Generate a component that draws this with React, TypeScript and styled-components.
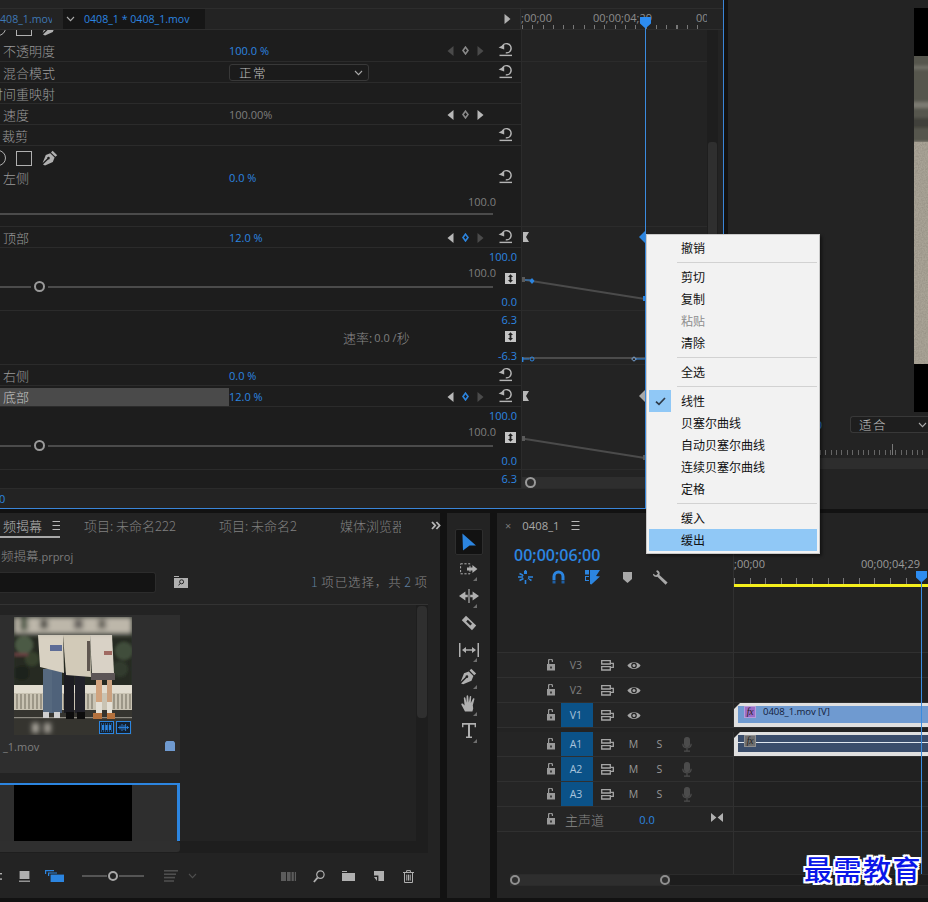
import * as React from 'react'
import styled, { createGlobalStyle } from 'styled-components'

const CJK = `"Noto Sans CJK SC", "Noto Sans", sans-serif`
const LATIN = `"Open Sans", "Noto Sans CJK SC", sans-serif`
const BLUE = '#2c85e0'
const GREY = '#8f8f8f'

const GlobalStyle = createGlobalStyle`
  html, body {
    margin: 0;
    padding: 0;
    background: #121212;
  }
  * {
    box-sizing: border-box;
  }
`

// icons
const Svg = styled.svg`
  display: block;
  flex: none;
`

const ResetIcon = () => (
  <Svg width="15" height="15" viewBox="0 0 15 15" fill="none" stroke="#b4b4b4">
    <path d="M4 5.2 A4.6 4.6 0 1 1 7.8 10.8" strokeWidth="1.5" />
    <path d="M0.6 5.6 L6.2 2.6 L6.2 7.6 Z" fill="#b4b4b4" stroke="none" />
    <path d="M1.5 13.4 H14" strokeWidth="1.4" />
  </Svg>
)

const Arrow = ({ dir, color }: { dir: 'l' | 'r'; color: string }) => (
  <Svg width="7" height="10" viewBox="0 0 7 10" fill={color}>
    <path d={dir === 'l' ? 'M6.5 0 V10 L0.5 5 Z' : 'M0.5 0 V10 L6.5 5 Z'} />
  </Svg>
)

const Diamond = ({ color }: { color: string }) => (
  <Svg width="7" height="9" viewBox="0 0 7 9" fill="none" stroke={color} strokeWidth="1.6">
    <path d="M3.5 1.1 L6 4.5 L3.5 7.9 L1 4.5 Z" />
  </Svg>
)

const StepperIcon = () => (
  <Svg width="11" height="11" viewBox="0 0 11 11">
    <rect width="11" height="11" fill="#c4c4c4" />
    <path d="M5.5 1.2 L8 4 H6.4 V7 H8 L5.5 9.8 L3 7 H4.6 V4 H3 Z" fill="#1d1d1d" />
  </Svg>
)

const PenIcon = ({ size = 16 }: { size?: number }) => (
  <Svg width={size} height={size} viewBox="0 0 16 16" fill="#b0b0b0">
    <path d="M10.6 0.8 L15.2 5.2 L13.4 6.8 L9 2.4 Z" />
    <path d="M8.2 3.2 L12.6 7.6 L10.8 12 L3 15.4 L1 14.6 L6.2 9.4 A1.3 1.3 0 1 0 5.2 8.4 L0.6 13 L3.8 5 Z" />
  </Svg>
)

const Chevron = ({ color = '#aaa' }: { color?: string }) => (
  <Svg width="9" height="6" viewBox="0 0 9 6" fill="none" stroke={color} strokeWidth="1.1">
    <path d="M1 1 L4.5 4.6 L8 1" />
  </Svg>
)

const MenuLines = () => (
  <Svg width="9" height="9" viewBox="0 0 9 9" stroke="#b8b8b8" strokeWidth="1">
    <path d="M0.5 0.5 H8.5 M0.5 4.5 H8.5 M0.5 8.5 H8.5" />
  </Svg>
)

const LockIcon = () => (
  <Svg width="10" height="12" viewBox="0 0 10 12" fill="#9a9a9a">
    <path d="M2 1 A2.6 2.6 0 0 1 7 1.6 V3 H5.8 V2 A1.3 1.3 0 0 0 3.2 2 V5 H9 V11.5 H1 V5 H2 Z M4.2 7.4 V9.6 H5.8 V7.4 Z" fillRule="evenodd" />
  </Svg>
)

const SyncIcon = () => (
  <Svg width="13" height="11" viewBox="0 0 13 11" fill="none" stroke="#a6a6a6" strokeWidth="1.3">
    <path d="M0.7 0.7 H9.3 V4 H0.7 Z M0.7 6.6 H9.3 V10 H0.7 Z" />
    <path d="M9.3 3.4 H12.3 V7.4 H9.3" />
  </Svg>
)

const EyeIcon = () => (
  <Svg width="14" height="9" viewBox="0 0 14 9">
    <path d="M0.4 4.5 C3 0 11 0 13.6 4.5 C11 9 3 9 0.4 4.5 Z" fill="#a6a6a6" />
    <circle cx="7" cy="4.5" r="2.8" fill="#232323" />
    <circle cx="7" cy="4.5" r="1.5" fill="#a6a6a6" />
  </Svg>
)

const MicIcon = () => (
  <Svg width="10" height="15" viewBox="0 0 10 15" fill="none" stroke="#4c4c4c" strokeWidth="1.2">
    <rect x="2.6" y="0.6" width="4.8" height="9" rx="2.4" fill="#4c4c4c" />
    <path d="M0.8 6.8 C0.8 12.2 9.2 12.2 9.2 6.8 M5 11 V14 M2 14.2 H8" />
  </Svg>
)

const Corner = styled.span`
  position: absolute;
  right: 6px;
  bottom: 1px;
  width: 0;
  height: 0;
  border-left: 4px solid transparent;
  border-bottom: 4px solid #6e6e6e;
`

const SelectTool = () => (
  <Svg width="16" height="18" viewBox="0 0 16 18" fill={BLUE}>
    <path d="M1.4 0.4 L15 12.6 L8.6 12.6 L2 17.6 Z" />
  </Svg>
)

const TrackSelectTool = () => (
  <Svg width="18" height="12" viewBox="0 0 18 12" fill="none" stroke="#b0b0b0">
    <rect x="0.6" y="0.8" width="9.4" height="10" strokeWidth="1" strokeDasharray="2.2 1.6" />
    <path d="M7 4.6 H12.4 V2 L17.4 6 L12.4 10 V7.4 H7 Z" fill="#b0b0b0" stroke="none" />
  </Svg>
)

const RippleTool = () => (
  <Svg width="20" height="14" viewBox="0 0 20 14" fill="#b0b0b0">
    <path d="M0 7 L6.4 2.6 V5.8 H8.8 V8.2 H6.4 V11.4 Z M20 7 L13.6 2.6 V5.8 H11.2 V8.2 H13.6 V11.4 Z" />
    <rect x="9.4" y="0" width="1.2" height="14" />
  </Svg>
)

const RazorTool = () => (
  <Svg width="16" height="16" viewBox="0 0 16 16">
    <path d="M5 0.8 L15.2 10.4 L11 15.2 L0.8 5.2 Z" fill="#b0b0b0" />
    <path d="M6 5.6 L10.2 9.6" stroke="#232323" strokeWidth="2.4" />
  </Svg>
)

const SlipTool = () => (
  <Svg width="20" height="14" viewBox="0 0 20 14" fill="#b0b0b0">
    <rect x="0" y="0" width="1.5" height="14" />
    <rect x="18.5" y="0" width="1.5" height="14" />
    <path d="M3 7 L7 4 V6.2 H13 V4 L17 7 L13 10 V7.8 H7 V10 Z" />
  </Svg>
)

const HandTool = () => (
  <Svg width="16" height="17" viewBox="0 0 16 17" fill="#b0b0b0">
    <path d="M4 16.5 L0.4 9.8 C0 8.6 1.4 8 2.2 9 L3.6 10.6 L2.8 3 C2.8 2 4.2 2 4.4 3 L5.4 7.8 L5.6 1 C5.8 0 7.2 0 7.2 1 L7.8 7.6 L8.8 1.6 C9 0.6 10.4 0.8 10.2 1.8 L9.8 8 L12 3.6 C12.6 2.8 13.6 3.2 13.4 4.2 L11.8 10.2 L12.2 13.4 L11.4 16.5 Z" />
  </Svg>
)

const TypeTool = () => (
  <Svg width="14" height="15" viewBox="0 0 14 15" fill="#b0b0b0">
    <path d="M0 0 H14 V4.2 H12.6 V1.8 H8 V13.4 H10 V15 H4 V13.4 H6 V1.8 H1.4 V4.2 H0 Z" />
  </Svg>
)

const MagnetIcon = () => (
  <Svg width="13" height="14" viewBox="0 0 13 14" fill="none">
    <path d="M2 10 V6.4 A4.5 4.5 0 0 1 11 6.4 V10" stroke={BLUE} strokeWidth="3" />
    <path d="M0.5 10.4 H3.5 V13.6 H0.5 Z M9.5 10.4 H12.5 V13.6 H9.5 Z" fill="#1f5fa3" />
  </Svg>
)

const NestIcon = () => (
  <Svg width="15" height="15" viewBox="0 0 15 15" fill={BLUE}>
    <path d="M0 0 H4 V4.4 H0 Z M0 6 H4 V7 H1 V10 H4 V11 H0 Z" />
    <path d="M5 0 H15 L11 6 L15 6.4 L6.4 14.4 L5 14 Z" />
  </Svg>
)

const LinkedIcon = () => (
  <Svg width="15" height="14" viewBox="0 0 15 14" stroke={BLUE} strokeWidth="1.6" fill={BLUE}>
    <path d="M7.5 0 V4 M7.5 10 V14 M0 7 H5 M10 7 H15 M1.5 3.5 L5.5 5.5 M13.5 10.5 L9.5 8.5 M1.5 10.5 L5.5 8.5" />
    <path d="M3 1.5 L13 12.5" stroke="#232323" strokeWidth="1" />
    <rect x="6" y="1" width="3" height="3" stroke="none" />
  </Svg>
)

const MarkerIcon = () => (
  <Svg width="9" height="11" viewBox="0 0 9 11" fill="#a8a8a8">
    <path d="M0 0 H9 V7 L4.5 11 L0 7 Z" />
  </Svg>
)

const WrenchIcon = () => (
  <Svg width="15" height="15" viewBox="0 0 15 15" fill="#a8a8a8">
    <path d="M4.6 0.2 A4 4 0 0 1 6.4 5 L14.6 12.4 L12.6 14.8 L4.4 6.8 A4 4 0 0 1 0 5 L0.2 3.8 L3 5.6 L5 3.6 L3 1 Z" />
  </Svg>
)

const MergeIcon = () => (
  <Svg width="12" height="9" viewBox="0 0 12 9" fill="#b0b0b0">
    <path d="M0 0 L5.4 4.5 L0 9 Z M12 0 L6.6 4.5 L12 9 Z" />
  </Svg>
)

const SearchBinIcon = () => (
  <Svg width="14" height="12" viewBox="0 0 14 12">
    <path d="M0 0 H5 V1 H0 Z M0 2 H14 V12 H0 Z" fill="#b0b0b0" />
    <circle cx="7.6" cy="5.8" r="2" fill="none" stroke="#232323" />
    <path d="M6.2 7.4 L4.6 9.4" stroke="#232323" />
  </Svg>
)

const SlimDoubleArrow = () => (
  <Svg width="10" height="9" viewBox="0 0 10 9" fill="none" stroke="#b8b8b8" strokeWidth="1.8">
    <path d="M1 1 L4.2 4.5 L1 8 M5.4 1 L8.6 4.5 L5.4 8" />
  </Svg>
)

const ListViewStub = () => (
  <Svg width="2" height="9" viewBox="0 0 2 9" fill="#b0b0b0">
    <rect y="1" width="2" height="1.4" />
    <rect y="6.4" width="2" height="1.4" />
  </Svg>
)

const ThumbViewIcon = () => (
  <Svg width="11" height="11" viewBox="0 0 11 11" fill="#b0b0b0">
    <rect x="0.6" y="0" width="9.8" height="8" />
    <rect x="0" y="9.6" width="11" height="1.2" />
  </Svg>
)

const StackedIcon = () => (
  <Svg width="19" height="12" viewBox="0 0 19 12" fill={BLUE}>
    <path d="M0 0 H9 V1.2 H1.2 V4 H0 Z M3 2.4 H12 V3.6 H4.2 V6 H3 Z" />
    <rect x="5.6" y="4.6" width="13.4" height="7.4" />
  </Svg>
)

const SortIcon = () => (
  <Svg width="14" height="12" viewBox="0 0 14 12" fill="#4f4f4f">
    <rect width="14" height="1.6" />
    <rect y="3.4" width="12" height="1.6" />
    <rect y="6.8" width="11" height="1.6" />
    <rect y="10.2" width="10" height="1.6" />
  </Svg>
)

const BarsIcon = () => (
  <Svg width="15" height="9" viewBox="0 0 15 9" fill="#5c5c5c">
    <rect width="5" height="9" />
    <rect x="6" width="3.6" height="9" />
    <rect x="10.6" width="2.2" height="9" />
    <rect x="13.8" width="1.2" height="9" />
  </Svg>
)

const SearchIcon = () => (
  <Svg width="12" height="13" viewBox="0 0 12 13" fill="none" stroke="#b0b0b0">
    <circle cx="7.4" cy="4.6" r="3.7" strokeWidth="1.2" />
    <path d="M4.6 7.6 L0.9 12" strokeWidth="1.8" />
  </Svg>
)

const FolderIcon = () => (
  <Svg width="13" height="10" viewBox="0 0 13 10" fill="#b0b0b0">
    <path d="M0 0 H5 V1 H0 Z M0 2 H13 V10 H0 Z" />
  </Svg>
)

const NewItemIcon = () => (
  <Svg width="10" height="10" viewBox="0 0 10 10" fill="#b0b0b0">
    <path d="M0 0 H10 V10 H4.4 V4.6 H0 Z M0 6 H3 V10 Z" />
  </Svg>
)

const TrashIcon = () => (
  <Svg width="11" height="13" viewBox="0 0 11 13" fill="none" stroke="#b0b0b0">
    <path d="M0 2.5 H11 M3.6 2.5 V0.6 H7.4 V2.5 M1.5 2.5 V12.5 H9.5 V2.5 M3.8 4.6 V10.6 M5.5 4.6 V10.6 M7.2 4.6 V10.6" />
  </Svg>
)

const TagIcon = () => (
  <Svg width="10" height="10" viewBox="0 0 10 10" fill="#6f9ad0">
    <path d="M1.5 0 H8.5 L10 1.5 V10 H0 V1.5 Z" />
  </Svg>
)

const CheckIcon = () => (
  <Svg width="11" height="9" viewBox="0 0 11 9" fill="none" stroke="#2e3b49" strokeWidth="1.7">
    <path d="M1 4.6 L4 7.4 L10 1" />
  </Svg>
)

const FilmBadge = () => (
  <Svg width="15" height="13" viewBox="0 0 15 13">
    <rect x="0.5" y="0.5" width="14" height="12" fill="#14202e" stroke={BLUE} />
    <path d="M2 3 H13 M2 10 H13" stroke={BLUE} strokeDasharray="1 1" />
    <path d="M2.6 4 H5.2 V9 H2.6 Z M6.2 4 H8.8 V9 H6.2 Z M9.8 4 H12.4 V9 H9.8 Z" fill={BLUE} />
  </Svg>
)

const WaveBadge = () => (
  <Svg width="15" height="13" viewBox="0 0 15 13">
    <rect x="0.5" y="0.5" width="14" height="12" fill="#14202e" stroke={BLUE} />
    <path d="M2 6.5 H13 M4 4.5 V8.5 M6 3 V10 M8 4 V9 M9.6 3 V10 M11.4 5 V8" stroke={BLUE} strokeWidth="0.9" />
  </Svg>
)

// shell
const Frame = styled.div`
  position: relative;
  width: 928px;
  height: 902px;
  overflow: hidden;
  background: #121212;
  font-family: ${CJK};
  color: ${GREY};
  display: flex;
  flex-direction: column;
`

const TopArea = styled.div`
  height: 513px;
  display: flex;
`

const BottomArea = styled.div`
  height: 385px;
  display: flex;
`

const EffectPanel = styled.section`
  position: relative;
  width: 724px;
  height: 509px;
  background: #232323;
  border-right: 1px solid #3a85d8;
  border-bottom: 1px solid #3a85d8;
  display: flex;
  flex-direction: column;
`

const PanelTop = styled.div`
  height: 9px;
  border-bottom: 1px solid #2d2d2d;
`

const EffectHead = styled.div`
  height: 21px;
  display: grid;
  grid-template-columns: 521px 186px;
  border-bottom: 1px solid #2d2d2d;
`

const TabStrip = styled.div`
  display: flex;
  align-items: stretch;
  border-right: 1px solid #2d2d2d;
  padding-right: 9px;
`

const EffectTab = styled.div<{ $active?: boolean; $width: number }>`
  width: ${(p) => p.$width}px;
  display: flex;
  align-items: center;
  gap: 9px;
  overflow: hidden;
  padding-left: ${(p) => (p.$active ? 3 : 0)}px;
  background: ${(p) => (p.$active ? '#161616' : 'transparent')};
  color: ${(p) => (p.$active ? BLUE : '#3f78b4')};
  font: 10.6px ${LATIN};
  white-space: nowrap;
  margin-right: ${(p) => (p.$active ? 'auto' : '11px')};
`

const ClippedName = styled.span`
  margin-left: -6px;
`

const TabEnd = styled.span`
  align-self: center;
`

const LaneRuler = styled.div`
  position: relative;
  display: flex;
  overflow: hidden;
  padding-top: 1px;
  font: 11px ${LATIN};
  color: #8c8c8c;
  white-space: nowrap;
  &::after {
    content: '';
    position: absolute;
    left: 1px;
    right: 0;
    bottom: 0;
    height: 4px;
    background: repeating-linear-gradient(90deg, #777 0 1px, transparent 1px 10.3px);
  }
`

const RulerLabel = styled.span<{ $width: number }>`
  flex: none;
  width: ${(p) => p.$width}px;
`

const EffectBody = styled.div`
  display: flex;
  flex: 1;
  min-height: 0;
`

const RowList = styled.div`
  width: 707px;
  display: flex;
  flex-direction: column;
`

const VScroll = styled.div`
  width: 11px;
  background: #1e1e1e;
  padding-top: 112px;
`

const VThumb = styled.div`
  width: 9px;
  height: 160px;
  margin-left: 1px;
  border-radius: 3px 3px 0 0;
  background: #2f2f2f;
`

const Row = styled.div<{ $h: number; $bg?: string }>`
  height: ${(p) => p.$h}px;
  display: grid;
  grid-template-columns: 521px 186px;
  border-bottom: 1px solid #2b2b2b;
  background: ${(p) => p.$bg || '#1d1d1d'};
`

const Lane = styled.div<{ $bare?: boolean }>`
  position: relative;
  overflow: hidden;
  background: ${(p) => (p.$bare ? 'transparent' : '#232323')};
  border-left: 1px solid #2b2b2b;
`

const Prop = styled.div`
  display: grid;
  grid-template-columns: 229px 214px 46px 32px;
  align-items: center;
  align-self: end;
  height: 21px;
`

const Label = styled.span<{ $offset?: number; $hilite?: boolean }>`
  display: flex;
  align-items: center;
  height: 18px;
  padding-left: ${(p) => p.$offset ?? 3}px;
  font-size: 13px;
  font-weight: 300;
  color: ${(p) => (p.$hilite ? '#c4c4c4' : '#9a9a9a')};
  background: ${(p) => (p.$hilite ? '#4a4a4a' : 'transparent')};
  white-space: nowrap;
  overflow: hidden;
`

const ClipText = styled.span<{ $shift: number }>`
  margin-left: ${(p) => p.$shift}px;
`

const Value = styled.span<{ $grey?: boolean }>`
  font: 11px ${LATIN};
  color: ${(p) => (p.$grey ? '#7d7d7d' : BLUE)};
  white-space: pre;
`

const Keys = styled.div`
  display: flex;
  align-items: center;
  justify-content: space-between;
  padding: 0 5px 0 4px;
`

const ResetCell = styled.div`
  display: flex;
  justify-content: center;
  margin-top: -2px;
`

const BlendSelect = styled.div`
  width: 140px;
  height: 17px;
  display: flex;
  align-items: center;
  justify-content: space-between;
  padding: 0 5px 0 9px;
  border: 1px solid #383838;
  border-radius: 3px;
  background: #1b1b1b;
  font-size: 12.5px;
  font-weight: 300;
  letter-spacing: 1.6px;
  color: #c0c0c0;
`

const MaskShapes = styled.div<{ $clip?: boolean }>`
  display: flex;
  align-items: center;
  gap: 10px;
  height: 18px;
  margin-left: -10px;
  margin-top: ${(p) => (p.$clip ? -11 : 0)}px;
`

const MaskEllipse = styled.span`
  width: 16px;
  height: 16px;
  border-radius: 50%;
  border: 1px solid #b0b0b0;
`

const MaskRect = styled.span`
  width: 16px;
  height: 15px;
  border: 1px solid #b0b0b0;
`

const LeftStack = styled.div`
  display: flex;
  flex-direction: column;
  overflow: hidden;
`

const Spacer = styled.div<{ $h: number }>`
  height: ${(p) => p.$h}px;
  flex: none;
`

const SliderBlock = styled.div`
  display: grid;
  grid-template-columns: 493px 28px;
`

const SliderSide = styled.div<{ $top: number }>`
  display: flex;
  flex-direction: column;
  align-items: flex-end;
  width: 493px;
  padding-top: ${(p) => p.$top}px;
`

const SliderMax = styled.span`
  font: 11px/14px ${LATIN};
  color: #7d7d7d;
  margin-right: -3px;
`

const SliderLine = styled.div`
  width: 100%;
  height: 11px;
  display: flex;
  align-items: center;
  margin-top: 1px;
`

const SliderRail = styled.span<{ $width?: number }>`
  flex: none;
  height: 2px;
  background: #4b4b4b;
  ${(p) => (p.$width ? `width: ${p.$width}px;` : 'flex: 1;')}
`

const SliderKnob = styled.span`
  flex: none;
  width: 11px;
  height: 11px;
  margin: 0 3px 0 3px;
  border-radius: 50%;
  border: 2px solid #9a9a9a;
`

const RangeColumn = styled.div`
  display: flex;
  flex-direction: column;
  align-items: flex-end;
  justify-content: space-between;
  padding: 2px 4px 1px 0;
  font: 11px/14px ${LATIN};
  color: ${BLUE};
  white-space: nowrap;
`

const StepperWrap = styled.span`
  margin: -3px 1px 0 0;
`

const RateBlock = styled.div`
  display: flex;
  align-items: center;
  padding-left: 343px;
  font-size: 13px;
  font-weight: 300;
  color: #8a8a8a;
`

const RateValue = styled.span`
  font: 11px ${LATIN};
  color: #7d7d7d;
  margin: 0 0 0 2px;
`

const ScrubRow = styled.div`
  display: flex;
  align-items: center;
  height: 19px;
  font: 11px ${LATIN};
  color: ${BLUE};
`

const BlueTail = styled.span`
  margin-left: -1px;
`

const LaneBar = styled.div`
  position: absolute;
  left: 0;
  right: 0;
  bottom: 0;
  height: 11px;
  padding-left: 3px;
  display: flex;
  align-items: center;
  background: #2e2e2e;
`

const LaneKnob = styled.span`
  width: 11px;
  height: 11px;
  border-radius: 50%;
  border: 2px solid #9a9a9a;
`

const Playhead = styled.div<{ $left: number; $top: number; $h: number }>`
  position: absolute;
  left: ${(p) => p.$left}px;
  top: ${(p) => p.$top}px;
  width: 1px;
  height: ${(p) => p.$h}px;
  background: #3a8be0;
  &::before {
    content: '';
    position: absolute;
    left: -5px;
    top: -1px;
    width: 11px;
    height: 11px;
    background: #2d8cf0;
    clip-path: polygon(0 0, 100% 0, 100% 60%, 55% 100%, 45% 100%, 0 60%);
  }
`

// monitor
const Gutter = styled.div<{ $w: number }>`
  width: ${(p) => p.$w}px;
  flex: none;
`

const MonitorPanel = styled.section`
  flex: 1;
  height: 509px;
  background: #232323;
  display: flex;
  flex-direction: column;
  padding-top: 8px;
`

const VideoWrap = styled.div`
  height: 404px;
  display: flex;
  justify-content: flex-end;
`

const Video = styled.div`
  width: 14px;
  display: flex;
  flex-direction: column;
  background: #000;
  padding: 48px 0;
`

const MonitorCtl = styled.div`
  display: flex;
  align-items: center;
  justify-content: flex-end;
  height: 17px;
  margin-top: 4px;
`

const FitSelect = styled.div`
  width: 78px;
  height: 17px;
  display: flex;
  align-items: center;
  justify-content: space-between;
  padding: 0 1px 0 8px;
  margin-left: 28px;
  border: 1px solid #383838;
  border-right: 0;
  border-radius: 3px 0 0 3px;
  background: #1e1e1e;
  font-size: 12.5px;
  font-weight: 300;
  letter-spacing: 1.4px;
  color: #c0c0c0;
`

const ZoomValue = styled.span`
  font: 11px ${LATIN};
  color: ${BLUE};
`

const MonRuler = styled.div`
  height: 15px;
  margin-top: 11px;
  background:
    repeating-linear-gradient(90deg, #777 0 1px, transparent 1px 82px) 0 0 / 100% 11px no-repeat,
    repeating-linear-gradient(90deg, #666 0 1px, transparent 1px 5.4px) 0 6px / 100% 5px no-repeat;
`

const MonScroll = styled.div`
  height: 11px;
  margin-top: -1px;
  background: #2d2d2d;
`

// project panel
const ProjectPanel = styled.section`
  width: 440px;
  background: #232323;
  display: flex;
  flex-direction: column;
  padding-right: 12px;
`

const TabRow = styled.div`
  height: 25px;
  display: flex;
  align-items: center;
  font-size: 13px;
  font-weight: 300;
  white-space: nowrap;
  color: #808080;
  position: relative;
`

const ProjTab = styled.div<{ $w: number; $gap?: number; $active?: boolean }>`
  flex: none;
  width: ${(p) => p.$w}px;
  height: 25px;
  margin-right: ${(p) => p.$gap ?? 0}px;
  display: flex;
  align-items: center;
  gap: 10px;
  overflow: hidden;
  color: ${(p) => (p.$active ? '#b4b4b4' : '#808080')};
  border-bottom: ${(p) => (p.$active ? '2px solid #a8a8a8' : 'none')};
  padding-top: ${(p) => (p.$active ? 2 : 0)}px;
  padding-left: ${(p) => (p.$active ? 3 : 0)}px;
`

const Overflow = styled.div`
  margin-left: 30px;
`

const PathLine = styled.div`
  height: 34px;
  padding: 8px 0 0 1px;
  font-size: 12.5px;
  font-weight: 300;
  color: #8a8a8a;
`

const PathExt = styled.span`
  font: 11px ${LATIN};
  color: #7b7b7b;
`

const SearchRow = styled.div`
  height: 33px;
  display: flex;
  align-items: flex-start;
  border-bottom: 1px solid #333;
`

const SearchInput = styled.div`
  width: 156px;
  height: 21px;
  background: #141414;
  border: 1px solid #2c2c2c;
  border-left: 0;
  border-radius: 0 3px 3px 0;
`

const SearchBtn = styled.div`
  margin: 4px 0 0 18px;
`

const Count = styled.div`
  margin-left: auto;
  font-size: 12.5px;
  font-weight: 300;
  letter-spacing: 0.9px;
  color: #8a8a8a;
  line-height: 20px;
  word-spacing: -1px;
`

const CountNum = styled.span`
  color: #5f7f9f;
`

const Bin = styled.div`
  height: 248px;
  display: flex;
`

const BinMain = styled.div`
  flex: 1;
  display: flex;
  flex-direction: column;
`

const Cards = styled.div`
  flex: 1;
  min-height: 0;
  padding-top: 10px;
  overflow: hidden;
`

const Card = styled.div<{ $selected?: boolean; $h: number }>`
  position: relative;
  width: 180px;
  height: ${(p) => p.$h}px;
  margin-bottom: 10px;
  padding: 2px 0 0 14px;
  background: #2e2e2e;
  ${(p) =>
    p.$selected
      ? `border-top: 2px solid ${BLUE}; border-right: 3px solid ${BLUE}; padding-top: 0;`
      : ''}
`

const ThumbBox = styled.div<{ $dark?: boolean }>`
  position: relative;
  width: 118px;
  height: 118px;
  background: #000;
`

const ClipBadges = styled.div`
  position: absolute;
  right: 1px;
  bottom: 1px;
  display: flex;
  gap: 2px;
`

const CardMeta = styled.div`
  display: flex;
  align-items: center;
  justify-content: space-between;
  height: 22px;
  margin: 0 5px 0 -11px;
  font: 11px ${LATIN};
  color: #7f7f7f;
`

const BinHScroll = styled.div`
  height: 12px;
  background: #1e1e1e;
`

const BinHThumb = styled.div`
  width: 180px;
  height: 11px;
  border-radius: 0 3px 3px 0;
  background: #2f2f2f;
`

const BinVScroll = styled.div`
  width: 12px;
  background: #1e1e1e;
  padding: 1px 1px 0;
`

const BinVThumb = styled.div`
  height: 112px;
  border-radius: 4px;
  background: #2f2f2f;
`

const Toolbar = styled.div`
  flex: 1;
  display: flex;
  align-items: center;
  padding-top: 1px;
  margin-right: -12px;
`

const Slot = styled.span<{ $gap: number }>`
  flex: none;
  margin-left: ${(p) => p.$gap}px;
`

const ZoomRail = styled.span`
  width: 25px;
  height: 2px;
  background: #555;
`

const ZoomSlider = styled.div`
  display: flex;
  align-items: center;
  gap: 1px;
  margin-left: 18px;
`

const ZoomKnob = styled.span`
  width: 10px;
  height: 10px;
  border-radius: 50%;
  border: 2px solid #a8a8a8;
`

// tools
const ToolPanel = styled.aside`
  width: 43px;
  background: #232323;
  padding-top: 16px;
  display: flex;
  flex-direction: column;
  align-items: center;
`

const Tool = styled.div<{ $selected?: boolean }>`
  position: relative;
  flex: none;
  width: 28px;
  height: ${(p) => (p.$selected ? 26 : 27)}px;
  display: flex;
  align-items: center;
  justify-content: center;
  border-radius: 2px;
  ${(p) => (p.$selected ? 'background: #121212; border: 1px solid #2e2e2e;' : '')}
`

// timeline
const TimelinePanel = styled.section`
  position: relative;
  flex: 1;
  background: #232323;
  display: flex;
  flex-direction: column;
`

const TimelineHead = styled.div`
  height: 140px;
  display: grid;
  grid-template-columns: 236px 1fr;
  border-bottom: 1px solid #303030;
`

const HeadLeft = styled.div`
  display: flex;
  flex-direction: column;
  padding-left: 8px;
`

const SeqTab = styled.div`
  height: 25px;
  display: flex;
  align-items: center;
  gap: 11px;
  font: 11.3px ${LATIN};
  color: #a8a8a8;
`

const CloseX = styled.span`
  font-size: 11px;
  color: #7a7a7a;
`

const Timecode = styled.div`
  margin: 7px 0 0 9px;
  font: 600 16px/20px ${LATIN};
  color: ${BLUE};
`

const TrackTools = styled.div`
  display: flex;
  align-items: center;
  height: 18px;
  margin: 3px 0 0 13px;
`

const ToolSlot = styled.span<{ $w: number }>`
  flex: none;
  width: ${(p) => p.$w}px;
`

const HeadRight = styled.div`
  border-left: 1px solid #303030;
  display: flex;
  flex-direction: column;
`

const TlRuler = styled.div`
  position: relative;
  height: 71px;
  padding-top: 44px;
  display: flex;
  font: 11px/14px ${LATIN};
  color: #9a9a9a;
  white-space: nowrap;
  &::after {
    content: '';
    position: absolute;
    left: 0;
    right: 0;
    bottom: 0;
    height: 6px;
    background: repeating-linear-gradient(90deg, #777 0 1px, transparent 1px 15.6px);
  }
`

const Yellow = styled.div`
  height: 3px;
  background: #f4ef1c;
`

const Track = styled.div<{ $gapTop?: boolean }>`
  height: 25px;
  display: grid;
  grid-template-columns: 236px 1fr;
  border-bottom: 1px solid #303030;
  margin-top: ${(p) => (p.$gapTop ? 4 : 0)}px;
`

const TrackHead = styled.div`
  display: grid;
  grid-template-columns: 47px 14px 3px 32px 28px 25px 27px 27px 33px;
  align-items: center;
  justify-items: center;
  background: #252525;
`

const LockCell = styled.span`
  grid-column: 2;
`

const TrackName = styled.span<{ $on?: boolean }>`
  grid-column: 4;
  width: 32px;
  height: 24px;
  display: flex;
  align-items: center;
  justify-content: center;
  padding-right: 2px;
  font: 10.5px ${LATIN};
  color: ${(p) => (p.$on ? '#a9c4dc' : '#808080')};
  background: ${(p) => (p.$on ? '#0b5288' : 'transparent')};
`

const MuteLetter = styled.span`
  font: 10.5px ${LATIN};
  color: #989898;
`

const MasterName = styled.span`
  grid-column: 4 / 6;
  justify-self: start;
  padding-left: 4px;
  font-size: 13px;
  font-weight: 300;
  color: #8a8a8a;
  white-space: nowrap;
`

const MasterValue = styled.span`
  grid-column: 6 / 8;
  font: 11px ${LATIN};
  color: ${BLUE};
`

const MergeCell = styled.span`
  grid-column: 9;
  margin-top: -4px;
`

const TrackLane = styled.div`
  border-left: 1px solid #303030;
  overflow: hidden;
  background: #212121;
`

const Clip = styled.div<{ $bg: string }>`
  position: relative;
  height: 24px;
  display: flex;
  align-items: flex-start;
  gap: 7px;
  padding-left: 6px;
  border-top: 3px solid #e0e0e0;
  border-bottom: 4px solid #e0e0e0;
  border-left: 4px solid #e0e0e0;
  background: ${(p) => p.$bg};
  font: 9.6px/12px ${LATIN};
  letter-spacing: -0.1px;
  color: #13203a;
  &::before {
    content: '';
    position: absolute;
    left: -4px;
    top: -3px;
    border-right: 6px solid transparent;
    border-top: 6px solid #232323;
  }
`

const AudioMid = styled.span`
  position: absolute;
  left: 0;
  right: 0;
  top: 7px;
  height: 1px;
  background: #dfe6ee;
`

const FxBadge = styled.span<{ $audio?: boolean }>`
  position: relative;
  flex: none;
  width: 12px;
  height: 12px;
  display: flex;
  align-items: center;
  justify-content: center;
  font: italic 9.5px/12px "Liberation Serif", serif;
  color: #1f1f1f;
  background: ${(p) => (p.$audio ? '#6e6e6e' : '#9a6cc6')};
  border: 1px solid ${(p) => (p.$audio ? '#8e8e8e' : '#b79bd8')};
`

const TlBlank = styled.div`
  height: 42px;
  display: grid;
  grid-template-columns: 236px 1fr;
`

const BlankLane = styled.div`
  border-left: 1px solid #303030;
`

const TlScroll = styled.div`
  height: 12px;
  margin-left: 13px;
  background: #1d1d1d;
  border-top: 1px solid #2b2b2b;
  border-bottom: 1px solid #2b2b2b;
`

const TlThumb = styled.div`
  width: 160px;
  height: 100%;
  display: flex;
  align-items: center;
  justify-content: space-between;
  background: #2e2e2e;
`

const TlKnob = styled.span`
  width: 10px;
  height: 10px;
  border-radius: 50%;
  border: 2px solid #8f8f8f;
`

// context menu
const Menu = styled.ul`
  position: absolute;
  left: 646px;
  top: 234px;
  width: 174px;
  height: 320px;
  margin: 0;
  padding: 2px 2px;
  list-style: none;
  background: #f2f2f2;
  border: 1px solid #c9c9c9;
  box-shadow: 2px 2px 3px rgba(0, 0, 0, 0.45);
  font: 12px/22px ${CJK};
  color: #111;
`

const MenuItem = styled.li<{ $disabled?: boolean; $hover?: boolean }>`
  display: flex;
  align-items: center;
  height: 22px;
  color: ${(p) => (p.$disabled ? '#8e8e8e' : '#111')};
  background: ${(p) => (p.$hover ? '#90c8f6' : 'transparent')};
`

const CheckBox = styled.span<{ $on?: boolean }>`
  flex: none;
  width: 22px;
  height: 22px;
  margin-right: 10px;
  display: flex;
  align-items: center;
  justify-content: center;
  background: ${(p) => (p.$on ? '#90c8f6' : 'transparent')};
`

const MenuSep = styled.li`
  height: 7px;
  margin-left: 28px;
  padding-top: 3px;
  &::after {
    content: '';
    display: block;
    height: 1px;
    background: #d2d2d2;
  }
`

const Watermark = styled.div`
  position: absolute;
  left: 804px;
  top: 851px;
  font: 500 28px/36px ${CJK};
  letter-spacing: 1.5px;
  color: #0a16e8;
  white-space: nowrap;
  text-shadow:
    2px 0 0 #fff, -2px 0 0 #fff, 0 2px 0 #fff, 0 -2px 0 #fff,
    2px 2px 0 #fff, -2px 2px 0 #fff, 2px -2px 0 #fff, -2px -2px 0 #fff;
`

const Thumbnail = () => (
  <Svg width="118" height="118" viewBox="0 0 118 118">
    <defs>
      <filter id="b6" x="-10%" y="-10%" width="120%" height="120%">
        <feGaussianBlur stdDeviation="2.4" />
      </filter>
      <filter id="b2">
        <feGaussianBlur stdDeviation="1.8" />
      </filter>
      <filter id="b1">
        <feGaussianBlur stdDeviation="0.5" />
      </filter>
    </defs>
    <rect width="118" height="118" fill="#2c312b" />
    <g filter="url(#b2)">
      <rect y="18" width="118" height="52" fill="#262c24" />
      <circle cx="10" cy="28" r="9" fill="#4b5a45" />
      <circle cx="18" cy="42" r="7" fill="#37432f" />
      <circle cx="8" cy="56" r="8" fill="#1f241e" />
      <rect x="0" y="36" width="14" height="3" fill="#6a3f42" />
      <circle cx="110" cy="34" r="9" fill="#414d3b" />
      <circle cx="106" cy="52" r="8" fill="#313a2d" />
    </g>
    <g filter="url(#b1)">
      <rect y="68" width="118" height="8" fill="#e1dccf" />
      <rect y="76" width="118" height="17" fill="#c9c3b3" />
    </g>
    <path
      d="M3 77 V92 M7 77 V92 M11 77 V92 M15 77 V92 M19 77 V92 M23 77 V92 M27 77 V92 M50 77 V92 M74 77 V92 M78 77 V92 M100 77 V92 M104 77 V92 M108 77 V92 M112 77 V92 M116 77 V92"
      stroke="#7f7a6b"
      strokeWidth="1.2"
    />
    <rect y="93" width="118" height="25" fill="#35342f" />
    <rect y="100" width="118" height="1.2" fill="#8d8a82" />
    <g filter="url(#b1)">
      <rect x="29" y="52" width="9" height="44" fill="#56697f" />
      <rect x="38" y="52" width="10" height="44" fill="#4f627a" />
      <rect x="50" y="55" width="10" height="41" fill="#1b1c22" />
      <rect x="61" y="55" width="10" height="41" fill="#20212a" />
      <rect x="82" y="62" width="6" height="34" fill="#d1a37e" />
      <rect x="93" y="62" width="5" height="34" fill="#caa17f" />
      <rect x="82" y="85" width="6" height="11" fill="#e3dfd5" />
      <rect x="93" y="85" width="5" height="11" fill="#e3dfd5" />
      <path d="M24 18 H49 L50 56 L26 50 Z" fill="#d8d1c2" />
      <path d="M49 18 H76 L77 60 L52 58 Z" fill="#d2cab8" />
      <path d="M76 18 H98 L100 56 L78 58 Z" fill="#d9d2c6" />
      <rect x="77" y="56" width="24" height="7" fill="#5b5457" />
      <rect x="36" y="28" width="12" height="6" fill="#5d6c96" />
      <rect x="73" y="24" width="3" height="30" fill="#5e5650" />
      <rect x="90" y="34" width="8" height="4" fill="#a06a62" />
      <rect x="29" y="95" width="6" height="6" fill="#cfcfcf" />
      <rect x="40" y="95" width="6" height="6" fill="#cfcfcf" />
      <rect x="52" y="95" width="8" height="7" fill="#101010" />
      <rect x="63" y="95" width="8" height="7" fill="#101010" />
      <rect x="79" y="96" width="9" height="6" fill="#b4713d" />
      <rect x="93" y="96" width="8" height="6" fill="#b4713d" />
    </g>
    <g filter="url(#b6)">
      <rect y="0" width="118" height="17" fill="#bdb7aa" />
      <rect x="6" y="0" width="8" height="14" fill="#576050" />
      <rect x="26" y="2" width="8" height="10" fill="#55524e" />
      <rect x="60" y="2" width="9" height="10" fill="#66625d" />
      <rect x="84" y="2" width="8" height="10" fill="#6a665f" />
      <rect x="18" y="106" width="7" height="10" fill="#a8a49b" />
      <rect x="30" y="106" width="7" height="10" fill="#a09c94" />
    </g>
  </Svg>
)

const AsphaltTexture = () => (
  <Svg width="14" height="308" viewBox="0 0 14 308">
    <defs>
      <filter id="grain" x="0" y="0" width="100%" height="100%">
        <feTurbulence type="fractalNoise" baseFrequency="0.7" numOctaves="2" seed="4" />
        <feColorMatrix values="0 0 0 0 0.2  0 0 0 0 0.18  0 0 0 0 0.15  0.7 0 0 0 -0.22" />
      </filter>
      <filter id="soft">
        <feGaussianBlur stdDeviation="0 1.6" />
      </filter>
    </defs>
    <rect width="14" height="308" fill="#a9a396" />
    <g filter="url(#soft)">
      <rect y="-4" width="14" height="90" fill="#57564e" />
      <rect y="10" width="14" height="3" fill="#75736a" />
      <rect y="46" width="14" height="6" fill="#7c7a72" />
      <rect y="62" width="14" height="10" fill="#3f3f3a" />
    </g>
    <rect y="86" width="14" height="222" fill="#a9a396" />
    <rect y="86" width="14" height="222" filter="url(#grain)" />
  </Svg>
)

const laneRows = {
  top: (
    <Svg width="186" height="62" viewBox="0 0 186 62">
      <path d="M0 31.5 L123 51" stroke="#4b4b4b" strokeWidth="2" fill="none" />
      <rect x="0" y="29" width="3" height="5" fill="#5a5a5a" />
      <path d="M3 32 H10" stroke={BLUE} strokeWidth="1" />
      <path d="M10 30 L12.5 33 L10 36 L7.5 33 Z" fill={BLUE} />
      <rect x="121" y="48" width="3" height="5" fill={BLUE} />
    </Svg>
  ),
  rate: (
    <Svg width="186" height="53" viewBox="0 0 186 53">
      <path d="M0 47 H123" stroke="#4b4b4b" strokeWidth="2" fill="none" />
      <path d="M0 48 H7 M113 48 H123" stroke={BLUE} />
      <circle cx="10" cy="48" r="2" fill="none" stroke={BLUE} />
      <path d="M112 45.8 L114.4 48 L112 50.2 L109.6 48 Z" fill="none" stroke="#7aa4d6" />
      <rect x="0" y="46" width="1.4" height="5" fill={BLUE} />
    </Svg>
  ),
  bottom: (
    <Svg width="186" height="62" viewBox="0 0 186 62">
      <path d="M0 31.5 L123 51" stroke="#4b4b4b" strokeWidth="2" fill="none" />
      <rect x="0" y="29" width="3" height="5" fill="#5a5a5a" />
      <rect x="121" y="48" width="3" height="5" fill="#5a5a5a" />
    </Svg>
  ),
}

const KeyTick = ({ color }: { color: string }) => (
  <Svg width="186" height="20" viewBox="0 0 186 20">
    <path d="M1 5 H7 L4 10 L7 15 H1 Z" fill="#b8b8b8" />
    <path d="M123 4 L117 10 L123 16 Z" fill={color} />
  </Svg>
)

const Reset = () => (
  <ResetCell>
    <ResetIcon />
  </ResetCell>
)

const KeyControls = ({ active, dim }: { active?: boolean; dim?: boolean }) => (
  <Keys>
    <Arrow dir="l" color={dim ? '#4a4a4a' : '#b8b8b8'} />
    <Diamond color={active ? BLUE : '#8a8a8a'} />
    <Arrow dir="r" color={active || dim ? '#4a4a4a' : '#b8b8b8'} />
  </Keys>
)

const SliderBody = () => (
  <SliderBlock>
    <SliderSide $top={18}>
      <SliderMax>100.0</SliderMax>
      <SliderLine>
        <SliderRail $width={31} />
        <SliderKnob />
        <SliderRail />
      </SliderLine>
    </SliderSide>
    <RangeColumn>
      <span>100.0</span>
      <StepperWrap>
        <StepperIcon />
      </StepperWrap>
      <span>0.0</span>
    </RangeColumn>
  </SliderBlock>
)

const menuGroups: { label: string; disabled?: boolean; checked?: boolean; hover?: boolean }[][] = [
  [{ label: '撤销' }],
  [{ label: '剪切' }, { label: '复制' }, { label: '粘贴', disabled: true }, { label: '清除' }],
  [{ label: '全选' }],
  [
    { label: '线性', checked: true },
    { label: '贝塞尔曲线' },
    { label: '自动贝塞尔曲线' },
    { label: '连续贝塞尔曲线' },
    { label: '定格' },
  ],
  [{ label: '缓入' }, { label: '缓出', hover: true }],
]

const ContextMenu = () => (
  <Menu>
    {menuGroups.map((group, i) => (
      <React.Fragment key={i}>
        {i > 0 && <MenuSep />}
        {group.map((item) => (
          <MenuItem key={item.label} $disabled={item.disabled} $hover={item.hover}>
            <CheckBox $on={item.checked}>{item.checked && <CheckIcon />}</CheckBox>
            {item.label}
          </MenuItem>
        ))}
      </React.Fragment>
    ))}
  </Menu>
)

const VideoTrack = ({ name, on }: { name: string; on?: boolean }) => (
  <TrackHead>
    <LockCell>
      <LockIcon />
    </LockCell>
    <TrackName $on={on}>{name}</TrackName>
    <SyncIcon />
    <EyeIcon />
  </TrackHead>
)

const AudioTrack = ({ name }: { name: string }) => (
  <TrackHead>
    <LockCell>
      <LockIcon />
    </LockCell>
    <TrackName $on>{name}</TrackName>
    <SyncIcon />
    <MuteLetter>M</MuteLetter>
    <MuteLetter>S</MuteLetter>
    <MicIcon />
  </TrackHead>
)

export default function App() {
  return (
    <Frame>
      <GlobalStyle />
      <TopArea>
        <EffectPanel>
          <PanelTop />
          <EffectHead>
            <TabStrip>
              <EffectTab $width={52}>
                <ClippedName>0408_1.mov</ClippedName>
              </EffectTab>
              <EffectTab $active $width={142}>
                <Chevron />
                0408_1 * 0408_1.mov
              </EffectTab>
              <TabEnd>
                <Arrow dir="r" color="#b0b0b0" />
              </TabEnd>
            </TabStrip>
            <LaneRuler>
              <RulerLabel $width={72}>;00;00</RulerLabel>
              <RulerLabel $width={103}>00;00;04;29</RulerLabel>
              <RulerLabel $width={12}>00;</RulerLabel>
            </LaneRuler>
          </EffectHead>
          <EffectBody>
            <RowList>
              <Row $h={32}>
                <LeftStack>
                  <MaskShapes $clip>
                    <MaskEllipse />
                    <MaskRect />
                    <PenIcon />
                  </MaskShapes>
                  <Spacer $h={3} />
                  <Prop>
                    <Label>不透明度</Label>
                    <Value>100.0 %</Value>
                    <KeyControls dim />
                    <Reset />
                  </Prop>
                </LeftStack>
                <Lane />
              </Row>
              <Row $h={21}>
                <Prop>
                  <Label>混合模式</Label>
                  <BlendSelect>
                    正常
                    <Chevron />
                  </BlendSelect>
                  <span />
                  <Reset />
                </Prop>
                <Lane />
              </Row>
              <Row $h={21}>
                <Prop>
                  <Label $offset={0}>
                    <ClipText $shift={-10}>时间重映射</ClipText>
                  </Label>
                </Prop>
                <Lane />
              </Row>
              <Row $h={21}>
                <Prop>
                  <Label>速度</Label>
                  <Value $grey>100.00%</Value>
                  <KeyControls />
                </Prop>
                <Lane />
              </Row>
              <Row $h={21}>
                <Prop>
                  <Label $offset={0}>
                    <ClipText $shift={2}>裁剪</ClipText>
                  </Label>
                  <span />
                  <span />
                  <Reset />
                </Prop>
                <Lane />
              </Row>
              <Row $h={81}>
                <LeftStack>
                  <Spacer $h={3} />
                  <MaskShapes>
                    <MaskEllipse />
                    <MaskRect />
                    <PenIcon />
                  </MaskShapes>
                  <Prop>
                    <Label>左侧</Label>
                    <Value>0.0 %</Value>
                    <span />
                    <Reset />
                  </Prop>
                  <SliderSide $top={7}>
                    <SliderMax>100.0</SliderMax>
                  </SliderSide>
                  <Spacer $h={4} />
                  <SliderRail $width={493} />
                </LeftStack>
                <Lane />
              </Row>
              <Row $h={21}>
                <Prop>
                  <Label>顶部</Label>
                  <Value>12.0 %</Value>
                  <KeyControls active />
                  <Reset />
                </Prop>
                <Lane>
                  <KeyTick color={BLUE} />
                </Lane>
              </Row>
              <Row $h={63}>
                <SliderBody />
                <Lane>{laneRows.top}</Lane>
              </Row>
              <Row $h={54}>
                <SliderBlock>
                  <RateBlock>
                    速率:
                    <RateValue>0.0 /</RateValue>秒
                  </RateBlock>
                  <RangeColumn>
                    <span>6.3</span>
                    <StepperWrap>
                      <StepperIcon />
                    </StepperWrap>
                    <span>-6.3</span>
                  </RangeColumn>
                </SliderBlock>
                <Lane>{laneRows.rate}</Lane>
              </Row>
              <Row $h={21}>
                <Prop>
                  <Label>右侧</Label>
                  <Value>0.0 %</Value>
                  <span />
                  <Reset />
                </Prop>
                <Lane />
              </Row>
              <Row $h={21}>
                <Prop>
                  <Label $hilite>底部</Label>
                  <Value>12.0 %</Value>
                  <KeyControls active />
                  <Reset />
                </Prop>
                <Lane>
                  <KeyTick color="#a8a8a8" />
                </Lane>
              </Row>
              <Row $h={63}>
                <SliderBody />
                <Lane>{laneRows.bottom}</Lane>
              </Row>
              <Row $h={19}>
                <SliderBlock>
                  <span />
                  <RangeColumn>
                    <span>6.3</span>
                  </RangeColumn>
                </SliderBlock>
                <Lane>
                  <LaneBar>
                    <LaneKnob />
                  </LaneBar>
                </Lane>
              </Row>
              <ScrubRow>
                <BlueTail>0</BlueTail>
              </ScrubRow>
            </RowList>
            <VScroll>
              <VThumb />
            </VScroll>
          </EffectBody>
          <Playhead $left={645} $top={18} $h={490} />
        </EffectPanel>
        <Gutter $w={4} />
        <MonitorPanel>
          <VideoWrap>
            <Video>
              <AsphaltTexture />
            </Video>
          </VideoWrap>
          <MonitorCtl>
            <ZoomValue>0</ZoomValue>
            <FitSelect>
              适合
              <Chevron />
            </FitSelect>
          </MonitorCtl>
          <MonRuler />
          <MonScroll />
        </MonitorPanel>
      </TopArea>
      <BottomArea>
        <ProjectPanel>
          <TabRow>
            <ProjTab $w={60} $gap={24} $active>
              频揭幕
              <MenuLines />
            </ProjTab>
            <ProjTab $w={135}>项目: 未命名222</ProjTab>
            <ProjTab $w={121}>项目: 未命名2</ProjTab>
            <ProjTab $w={61}>媒体浏览器</ProjTab>
            <Overflow>
              <SlimDoubleArrow />
            </Overflow>
          </TabRow>
          <PathLine>
            频揭幕<PathExt>.prproj</PathExt>
          </PathLine>
          <SearchRow>
            <SearchInput />
            <SearchBtn>
              <SearchBinIcon />
            </SearchBtn>
            <Count>
              <CountNum>1</CountNum> 项已选择，共 <CountNum>2</CountNum> 项
            </Count>
          </SearchRow>
          <Bin>
            <BinMain>
              <Cards>
                <Card $h={158}>
                  <ThumbBox>
                    <Thumbnail />
                    <ClipBadges>
                      <FilmBadge />
                      <WaveBadge />
                    </ClipBadges>
                  </ThumbBox>
                  <CardMeta>
                    _1.mov
                    <TagIcon />
                  </CardMeta>
                </Card>
                <Card $h={70} $selected>
                  <ThumbBox />
                </Card>
              </Cards>
              <BinHScroll>
                <BinHThumb />
              </BinHScroll>
            </BinMain>
            <BinVScroll>
              <BinVThumb />
            </BinVScroll>
          </Bin>
          <Toolbar>
            <ListViewStub />
            <Slot $gap={17}>
              <ThumbViewIcon />
            </Slot>
            <Slot $gap={15}>
              <StackedIcon />
            </Slot>
            <ZoomSlider>
              <ZoomRail />
              <ZoomKnob />
              <ZoomRail />
            </ZoomSlider>
            <Slot $gap={20}>
              <SortIcon />
            </Slot>
            <Slot $gap={10}>
              <Chevron color="#4f4f4f" />
            </Slot>
            <Slot $gap={84}>
              <BarsIcon />
            </Slot>
            <Slot $gap={17}>
              <SearchIcon />
            </Slot>
            <Slot $gap={17}>
              <FolderIcon />
            </Slot>
            <Slot $gap={19}>
              <NewItemIcon />
            </Slot>
            <Slot $gap={19}>
              <TrashIcon />
            </Slot>
          </Toolbar>
        </ProjectPanel>
        <Gutter $w={7} />
        <ToolPanel>
          <Tool $selected>
            <SelectTool />
          </Tool>
          <Tool>
            <TrackSelectTool />
            <Corner />
          </Tool>
          <Tool>
            <RippleTool />
            <Corner />
          </Tool>
          <Tool>
            <RazorTool />
          </Tool>
          <Tool>
            <SlipTool />
            <Corner />
          </Tool>
          <Tool>
            <PenIcon size={17} />
            <Corner />
          </Tool>
          <Tool>
            <HandTool />
            <Corner />
          </Tool>
          <Tool>
            <TypeTool />
            <Corner />
          </Tool>
        </ToolPanel>
        <Gutter $w={7} />
        <TimelinePanel>
          <TimelineHead>
            <HeadLeft>
              <SeqTab>
                <CloseX>×</CloseX>
                0408_1
                <MenuLines />
              </SeqTab>
              <Timecode>00;00;06;00</Timecode>
              <TrackTools>
                <ToolSlot $w={34}>
                  <LinkedIcon />
                </ToolSlot>
                <ToolSlot $w={33}>
                  <MagnetIcon />
                </ToolSlot>
                <ToolSlot $w={38}>
                  <NestIcon />
                </ToolSlot>
                <ToolSlot $w={30}>
                  <MarkerIcon />
                </ToolSlot>
                <ToolSlot $w={20}>
                  <WrenchIcon />
                </ToolSlot>
              </TrackTools>
            </HeadLeft>
            <HeadRight>
              <TlRuler>
                <RulerLabel $width={127}>;00;00</RulerLabel>
                <RulerLabel $width={60}>00;00;04;29</RulerLabel>
              </TlRuler>
              <Yellow />
            </HeadRight>
          </TimelineHead>
          <Track>
            <VideoTrack name="V3" />
            <TrackLane />
          </Track>
          <Track>
            <VideoTrack name="V2" />
            <TrackLane />
          </Track>
          <Track>
            <VideoTrack name="V1" on />
            <TrackLane>
              <Clip $bg="#6f9ad0">
                <FxBadge>fx</FxBadge>
                0408_1.mov [V]
              </Clip>
            </TrackLane>
          </Track>
          <Track $gapTop>
            <AudioTrack name="A1" />
            <TrackLane>
              <Clip $bg="#3a4d6b">
                <AudioMid />
                <FxBadge $audio>fx</FxBadge>
              </Clip>
            </TrackLane>
          </Track>
          <Track>
            <AudioTrack name="A2" />
            <TrackLane />
          </Track>
          <Track>
            <AudioTrack name="A3" />
            <TrackLane />
          </Track>
          <Track>
            <TrackHead>
              <LockCell>
                <LockIcon />
              </LockCell>
              <MasterName>主声道</MasterName>
              <MasterValue>0.0</MasterValue>
              <MergeCell>
                <MergeIcon />
              </MergeCell>
            </TrackHead>
            <TrackLane />
          </Track>
          <TlBlank>
            <span />
            <BlankLane />
          </TlBlank>
          <TlScroll>
            <TlThumb>
              <TlKnob />
              <TlKnob />
            </TlThumb>
          </TlScroll>
          <Playhead $left={424} $top={59} $h={302} />
        </TimelinePanel>
      </BottomArea>
      <ContextMenu />
      <Watermark>最需教育</Watermark>
    </Frame>
  )
}
